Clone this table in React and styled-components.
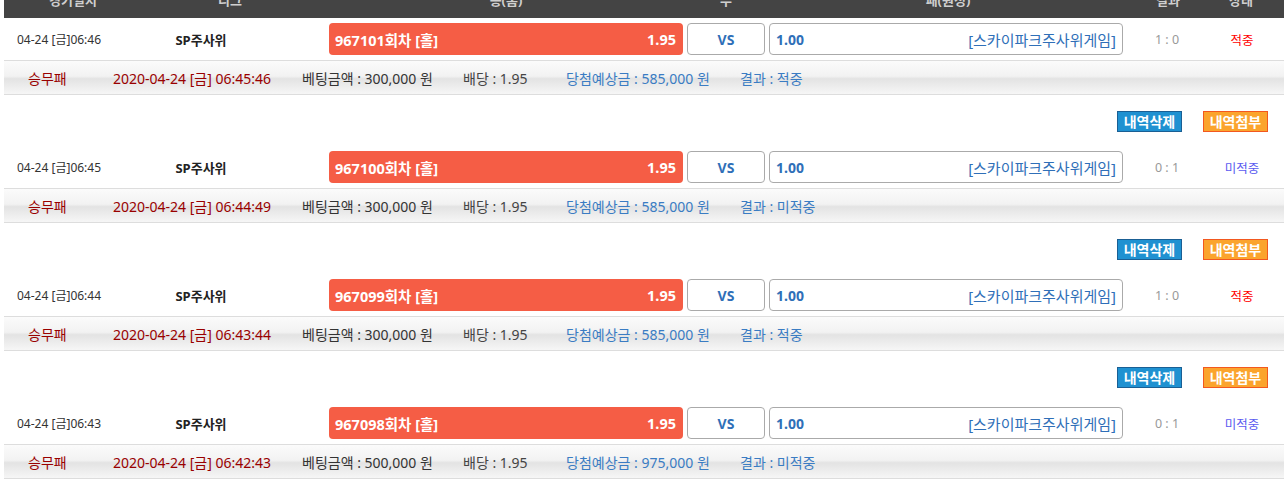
import React from 'react';
import styled, { createGlobalStyle } from 'styled-components';

const GlobalStyle = createGlobalStyle`
	html, body {
		margin: 0;
		padding: 0;
		background: #fff;
		overflow: hidden;
	}
	body {
		font-family: "Noto Sans", "Noto Sans CJK KR", sans-serif;
	}
`;

const games = [
	{ date: '04-24 [금]06:46', round: '967101', score: '1 : 0', hit: true, time: '2020-04-24 [금] 06:45:46', bet: '300,000', win: '585,000' },
	{ date: '04-24 [금]06:45', round: '967100', score: '0 : 1', hit: false, time: '2020-04-24 [금] 06:44:49', bet: '300,000', win: '585,000' },
	{ date: '04-24 [금]06:44', round: '967099', score: '1 : 0', hit: true, time: '2020-04-24 [금] 06:43:44', bet: '300,000', win: '585,000' },
	{ date: '04-24 [금]06:43', round: '967098', score: '0 : 1', hit: false, time: '2020-04-24 [금] 06:42:43', bet: '500,000', win: '975,000' },
];

export default function App() {
	return (
		<Page>
			<GlobalStyle />
			<Header>
				<span>경기일시</span>
				<span>리그</span>
				<span>승(홈)</span>
				<span>무</span>
				<span>패(원정)</span>
				<span>결과</span>
				<span>상태</span>
			</Header>
			{games.map((g) => (
				<React.Fragment key={g.round}>
					<Row>
						<DateCell>{g.date}</DateCell>
						<League>SP주사위</League>
						<HomePick>
							<span>{g.round}회차 [홀]</span>
							<span>1.95</span>
						</HomePick>
						<DrawPick>VS</DrawPick>
						<AwayPick>
							<b>1.00</b>
							<span>[스카이파크주사위게임]</span>
						</AwayPick>
						<Score>{g.score}</Score>
						<Status $hit={g.hit}>{g.hit ? '적중' : '미적중'}</Status>
					</Row>
					<Detail>
						<Item $w={85} $c="#990000">승무패</Item>
						<Item $w={189} $c="#990000">{g.time}</Item>
						<Item $w={161} $c="#333">베팅금액 : {g.bet} 원</Item>
						<Item $w={103} $c="#444">배당 : 1.95</Item>
						<Item $w={174} $c="#3a7cc3">당첨예상금 : {g.win} 원</Item>
						<Item $c="#3a7cc3">결과 : {g.hit ? '적중' : '미적중'}</Item>
					</Detail>
					<Actions>
						<ActionButton $bg="#1f91d1" $bd="#1a5f94">내역삭제</ActionButton>
						<ActionButton $bg="#fba42d" $bd="#f2581f">내역첨부</ActionButton>
					</Actions>
				</React.Fragment>
			))}
		</Page>
	);
}

const Page = styled.div`
	margin-top: -18px;
	padding-left: 4px;
	width: 1280px;
`;

const Header = styled.div`
	display: grid;
	grid-template-columns: 138px 176px 376px 64px 380px 60px 1fr;
	height: 36px;
	background: #444;
	align-items: center;

	span {
		text-align: center;
		color: #cfcfcf;
		font-size: 13px;
		font-weight: bold;
		line-height: 36px;
	}
`;

const Row = styled.div`
	display: flex;
	align-items: center;
	height: 42px;
	border-bottom: 1px solid #ddd;
`;

const DateCell = styled.div`
	width: 127px;
	padding-left: 13px;
	font-size: 12px;
	color: #333;
	white-space: nowrap;
`;

const League = styled.div`
	width: 114px;
	margin-right: 71px;
	text-align: center;
	font-size: 13px;
	font-weight: bold;
	color: #222;
`;

const Pick = styled.div`
	box-sizing: border-box;
	height: 32px;
	border-radius: 4px;
	display: flex;
	align-items: center;
	font-size: 14px;
	white-space: nowrap;
`;

const HomePick = styled(Pick)`
	width: 354px;
	padding: 0 7px 0 6px;
	justify-content: space-between;
	background: #f55d45;
	color: #fff;
	font-weight: bold;
	font-size: 14.5px;
`;

const DrawPick = styled(Pick)`
	width: 78px;
	margin-left: 4px;
	justify-content: center;
	border: 1px solid #aaa;
	color: #2f6fb8;
	font-weight: bold;
`;

const AwayPick = styled(Pick)`
	width: 354px;
	margin-left: 4px;
	padding: 0 6px;
	justify-content: space-between;
	border: 1px solid #aaa;
	color: #2f6fb8;

	span {
		font-size: 15px;
	}
`;

const Score = styled.div`
	width: 88px;
	text-align: center;
	font-size: 12.5px;
	color: #999;
`;

const Status = styled.div`
	width: 62px;
	text-align: center;
	font-size: 12.5px;
	color: ${(p) => (p.$hit ? '#f00' : '#5b5bf0')};
`;

const Detail = styled.div`
	display: flex;
	align-items: center;
	height: 33px;
	padding-left: 24px;
	border-bottom: 1px solid #ddd;
	background: linear-gradient(#fbfbfb 0%, #f2f2f2 46%, #e3e3e3 54%, #f6f6f6 100%);
`;

const Item = styled.span`
	width: ${(p) => (p.$w ? `${p.$w}px` : 'auto')};
	flex-shrink: 0;
	font-size: 14px;
	color: ${(p) => p.$c};
	white-space: nowrap;
`;

const Actions = styled.div`
	display: flex;
	justify-content: flex-end;
	align-items: flex-start;
	gap: 21px;
	height: 51px;
	box-sizing: border-box;
	padding: 16px 16px 0 0;
`;

const ActionButton = styled.button`
	box-sizing: border-box;
	width: 65px;
	height: 21px;
	padding: 0;
	border: 1px solid ${(p) => p.$bd};
	background: ${(p) => p.$bg};
	color: #fff;
	font-family: inherit;
	font-size: 14px;
	font-weight: bold;
	line-height: 19px;
	cursor: pointer;
`;
